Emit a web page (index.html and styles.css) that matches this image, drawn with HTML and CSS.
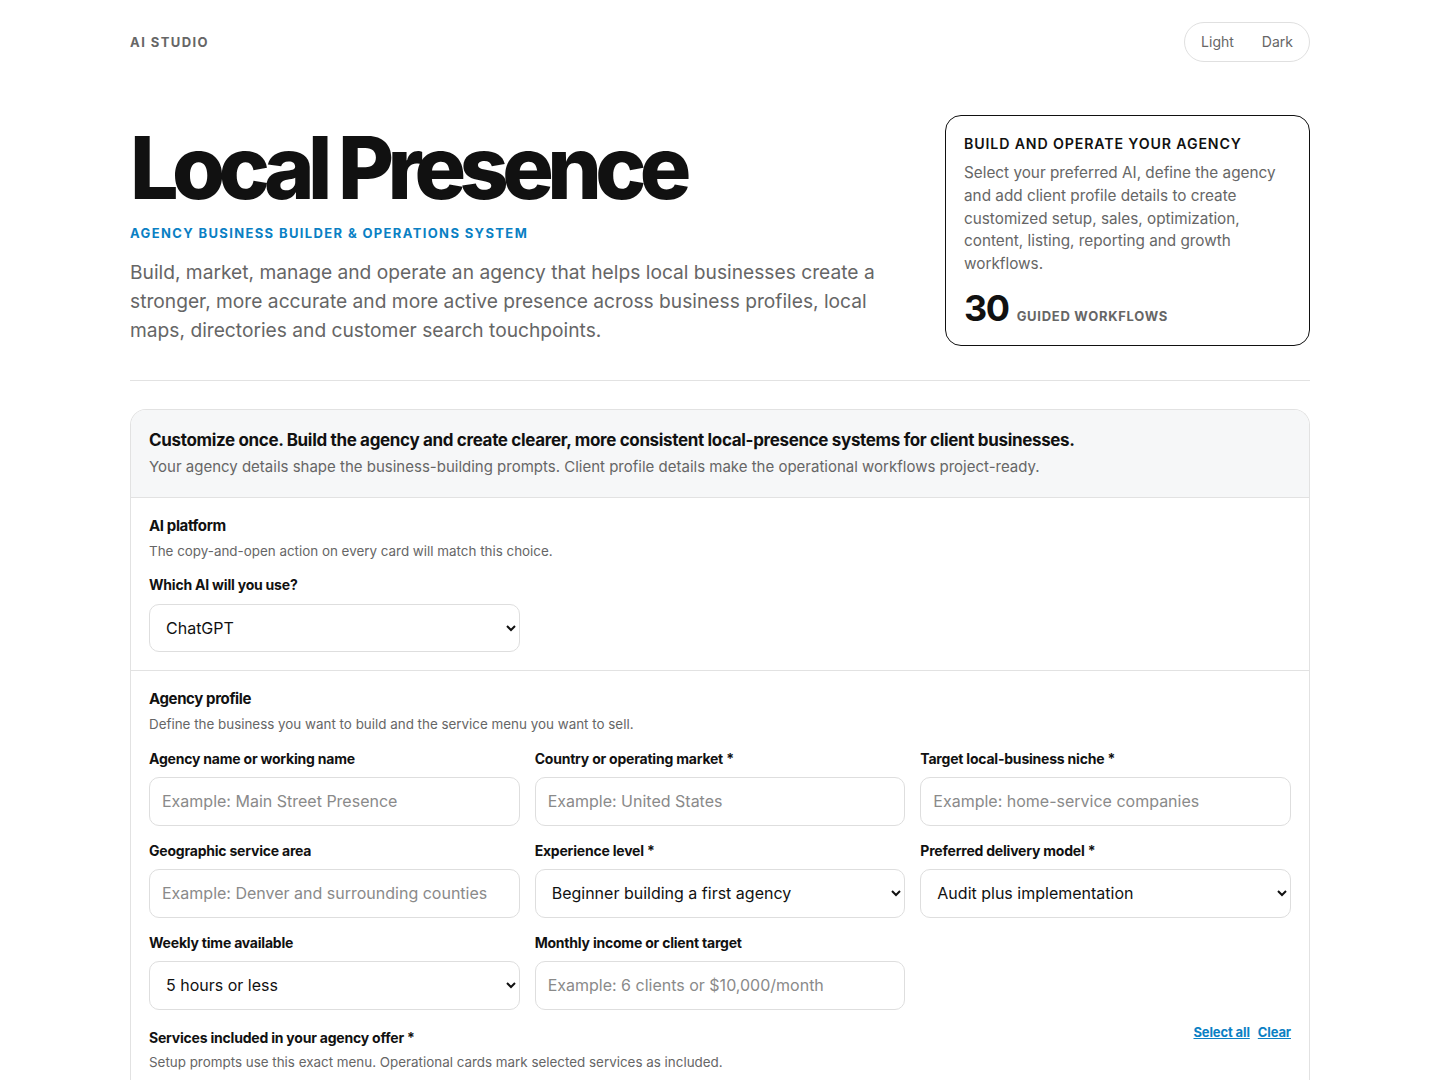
FILE: index.html
```html
<!DOCTYPE html>
<html lang="en">
<head>
  <meta charset="UTF-8">
  <meta name="viewport" content="width=device-width, initial-scale=1.0">
  <title>Local Presence</title>
  <link rel="stylesheet" href="styles.css">
</head>
<body>
  <div class="page">

    <header class="topbar">
      <div class="brand">AI STUDIO</div>
      <div class="theme-toggle">
        <button class="theme-btn">Light</button>
        <button class="theme-btn">Dark</button>
      </div>
    </header>

    <section class="hero">
      <div class="hero-text">
        <h1>Local Presence</h1>
        <div class="eyebrow">AGENCY BUSINESS BUILDER &amp; OPERATIONS SYSTEM</div>
        <p class="lead">Build, market, manage and operate an agency that helps local businesses create a stronger, more accurate and more active presence across business profiles, local maps, directories and customer search touchpoints.</p>
      </div>
      <div class="hero-card">
        <h3>BUILD AND OPERATE YOUR AGENCY</h3>
        <p>Select your preferred AI, define the agency and add client profile details to create customized setup, sales, optimization, content, listing, reporting and growth workflows.</p>
        <div class="count"><strong>30</strong><span>GUIDED WORKFLOWS</span></div>
      </div>
    </section>

    <hr class="divider">

    <div class="panel">
      <div class="panel-head">
        <h2>Customize once. Build the agency and create clearer, more consistent local-presence systems for client businesses.</h2>
        <p>Your agency details shape the business-building prompts. Client profile details make the operational workflows project-ready.</p>
      </div>

      <div class="section">
        <h4>AI platform</h4>
        <p class="hint">The copy-and-open action on every card will match this choice.</p>
        <div class="grid">
          <div class="field">
            <label for="ai">Which AI will you use?</label>
            <select id="ai" class="ai-select">
              <option>ChatGPT</option>
              <option>Claude</option>
              <option>Gemini</option>
            </select>
          </div>
        </div>
      </div>

      <div class="section profile">
        <h4>Agency profile</h4>
        <p class="hint">Define the business you want to build and the service menu you want to sell.</p>
        <div class="grid">
          <div class="field">
            <label>Agency name or working name</label>
            <input type="text" placeholder="Example: Main Street Presence">
          </div>
          <div class="field">
            <label>Country or operating market *</label>
            <input type="text" placeholder="Example: United States">
          </div>
          <div class="field">
            <label>Target local-business niche *</label>
            <input type="text" placeholder="Example: home-service companies">
          </div>
          <div class="field">
            <label>Geographic service area</label>
            <input type="text" placeholder="Example: Denver and surrounding counties">
          </div>
          <div class="field">
            <label>Experience level *</label>
            <select>
              <option>Beginner building a first agency</option>
            </select>
          </div>
          <div class="field">
            <label>Preferred delivery model *</label>
            <select>
              <option>Audit plus implementation</option>
            </select>
          </div>
          <div class="field">
            <label>Weekly time available</label>
            <select>
              <option>5 hours or less</option>
            </select>
          </div>
          <div class="field">
            <label>Monthly income or client target</label>
            <input type="text" placeholder="Example: 6 clients or $10,000/month">
          </div>
        </div>

        <div class="services-head">
          <div>
            <label>Services included in your agency offer *</label>
            <p class="hint">Setup prompts use this exact menu. Operational cards mark selected services as included.</p>
          </div>
          <div class="links">
            <a href="#">Select all</a>
            <a href="#">Clear</a>
          </div>
        </div>
      </div>
    </div>

  </div>
</body>
</html>
```

FILE: styles.css
```css
* {
  box-sizing: border-box;
}

body {
  margin: 0;
  background: #ffffff;
  color: #111111;
  font-family: Inter, "Noto Sans", Arial, sans-serif;
}

.page {
  width: 1180px;
  margin: 0 auto;
  padding-top: 22px;
}

.topbar {
  display: flex;
  justify-content: space-between;
  align-items: center;
  height: 40px;
}

.brand {
  font-size: 13px;
  font-weight: 700;
  letter-spacing: 0.11em;
  color: #666666;
}

.theme-toggle {
  display: flex;
  border: 1px solid #e0e0e0;
  border-radius: 20px;
  height: 40px;
  padding: 0 4px 1px;
  align-items: center;
}

.theme-btn {
  background: none;
  border: none;
  font-family: inherit;
  font-size: 14px;
  color: #666666;
  padding: 0 12px;
  cursor: pointer;
}

.theme-btn + .theme-btn {
  margin-left: 4px;
}

.hero {
  display: grid;
  grid-template-columns: 1fr 365px;
  gap: 70px;
  margin-top: 53px;
  padding-bottom: 34px;
}

.hero h1 {
  margin: 10px 0 0;
  font-size: 86px;
  line-height: 1;
  font-weight: 800;
  letter-spacing: -0.077em;
  color: #111111;
}

.eyebrow {
  margin-top: 14px;
  font-size: 13px;
  line-height: 16px;
  font-weight: 700;
  letter-spacing: 0.105em;
  color: #0a80c4;
}

.lead {
  margin: 17px 0 0;
  font-size: 19.2px;
  line-height: 29px;
  color: #666666;
  max-width: 760px;
}

.hero-card {
  border: 1px solid #111111;
  border-radius: 16px;
  padding: 18px 18px 19px;
  align-self: start;
}

.hero-card h3 {
  margin: 0;
  font-size: 14.2px;
  line-height: 20px;
  font-weight: 600;
  letter-spacing: 0.06em;
}

.hero-card p {
  margin: 8px 0 0;
  font-size: 15.3px;
  line-height: 22.8px;
  color: #666666;
}

.count {
  display: flex;
  align-items: baseline;
  gap: 8px;
  margin-top: 14px;
}

.count strong {
  font-size: 36px;
  line-height: 36px;
  font-weight: 700;
  letter-spacing: -0.04em;
}

.count span {
  font-size: 13px;
  font-weight: 700;
  letter-spacing: 0.055em;
  color: #666666;
}

.divider {
  border: none;
  border-top: 1px solid #e2e2e2;
  margin: 0;
}

.panel {
  margin-top: 28px;
  border: 1px solid #e2e2e2;
  border-bottom: none;
  border-radius: 16px 16px 0 0;
  overflow: hidden;
}

.panel-head {
  background: #f6f7f8;
  padding: 18px 18px 19px;
  border-bottom: 1px solid #e2e2e2;
}

.panel-head h2 {
  margin: 0;
  font-size: 17px;
  line-height: 24px;
  font-weight: 700;
  letter-spacing: -0.02em;
}

.panel-head p {
  margin: 4px 0 0;
  font-size: 15px;
  line-height: 22px;
  color: #666666;
}

.section {
  padding: 18px 18px 18px;
  border-bottom: 1px solid #e2e2e2;
}

.section h4 {
  margin: 0;
  font-size: 15px;
  line-height: 20px;
  font-weight: 700;
  letter-spacing: -0.025em;
}

.hint {
  margin: 6px 0 0;
  font-size: 13.4px;
  line-height: 18px;
  color: #666666;
}

.grid {
  display: grid;
  grid-template-columns: repeat(3, 1fr);
  column-gap: 15px;
  row-gap: 16px;
  margin-top: 16px;
}

.profile .grid {
  margin-top: 17px;
}

.field {
  display: flex;
  flex-direction: column;
  gap: 9px;
}

label {
  font-size: 14px;
  line-height: 18px;
  font-weight: 700;
  letter-spacing: -0.015em;
  color: #111111;
}

input,
select {
  height: 49px;
  border: 1px solid #dedede;
  border-radius: 10px;
  background: #ffffff;
  font-family: inherit;
  font-size: 16px;
  color: #111111;
  padding: 0 12px;
}

.ai-select {
  height: 48px;
  margin-top: 1px;
}

input::placeholder {
  color: #8a8a8a;
}

.services-head {
  display: flex;
  justify-content: space-between;
  align-items: flex-start;
  margin-top: 17px;
}

.links {
  display: flex;
  gap: 8px;
  margin-top: -3px;
}

.links a {
  font-size: 13px;
  font-weight: 700;
  color: #0a80c4;
  letter-spacing: -0.01em;
}
```
